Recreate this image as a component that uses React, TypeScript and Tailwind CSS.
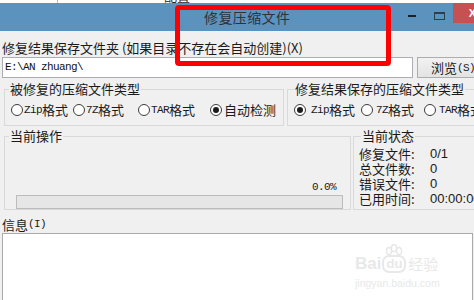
import React from "react";

const cjk = "font-['Noto_Sans_CJK_SC',sans-serif]";
const mono = "font-['Liberation_Mono','Noto_Sans_CJK_SC',monospace]";

function Radio({
  checked,
  ascii,
  text,
  className = "",
  gap = "ml-[1px]",
}: {
  checked?: boolean;
  ascii?: string;
  text: string;
  className?: string;
  gap?: string;
}) {
  return (
    <div className={`flex items-center shrink-0 ${className}`}>
      <span className="w-[12px] h-[12px] rounded-full border border-[#3c3c3c] bg-white flex items-center justify-center shrink-0">
        {checked && <span className="w-[6px] h-[6px] rounded-full bg-[#1b1b1b]" />}
      </span>
      <span className={`${gap} flex items-center leading-[16px] text-[13px] text-[#1a1a1a] whitespace-nowrap`}>
        {ascii && <span className={`${mono} text-[11px] tracking-[-0.6px]`}>{ascii}</span>}
        <span className={cjk}>{text}</span>
      </span>
    </div>
  );
}

function StatusRow({ label, value }: { label: string; value: string }) {
  return (
    <div className="flex h-[15px] items-center text-[13px] leading-[13px] text-[#1a1a1a] whitespace-nowrap">
      <span className={`${cjk} w-[71px] shrink-0`}>{label}</span>
      <span className="font-['Liberation_Sans',sans-serif]">{value}</span>
    </div>
  );
}

export default function App() {
  return (
    <div className={`relative w-[474px] h-[300px] overflow-hidden bg-[#f0f0f0] ${cjk} text-[#1a1a1a]`}>
      {/* strip of the window behind */}
      <div className="relative h-[3px] bg-white overflow-hidden flex">
        <div className="ml-[57px] w-[1px] h-[3px] bg-[#b9b9b9]" />
        <span className="ml-[106px] -mt-[12px] text-[13px] leading-[15px] text-[#222]">配置</span>
      </div>

      {/* title bar */}
      <div className="h-[28px] bg-[#5b93be] flex items-start">
        <span className="pl-[204px] pt-[5px] text-[14px] leading-[18px] tracking-[0.4px] text-[#2e3339]">修复压缩文件</span>
        <div className="ml-auto flex items-start">
          <div className="mt-[12px] w-[8px] h-[2px] bg-[#1f1f1f]" />
          <div className="ml-[18px] mt-[9px] w-[11px] h-[8px] border border-t-2 border-[#2a3f52]" />
          <div className="ml-[8px] w-[21px] h-[20px] bg-[#c75050] flex items-center justify-end overflow-hidden">
            <span className="text-white text-[11px] font-bold leading-none -mr-[2px] font-['Liberation_Sans',sans-serif]">X</span>
          </div>
        </div>
      </div>

      <div className="px-[2px]">
        <div className="mt-[9px] h-[16px] leading-[16px] text-[13px] whitespace-nowrap">
          修复结果保存文件夹 (如果目录不存在会自动创建)(X)
        </div>

        <div className="mt-[1px] flex items-start">
          <div className="w-[411px] h-[21px] bg-white border border-[#abadb3] flex items-center pl-[2px] shrink-0">
            <span className={`${mono} text-[11px] tracking-[-0.6px] text-[#111]`}>E:\AN zhuang\</span>
          </div>
          <div className="ml-[4px] w-[62px] h-[21px] border border-[#adadad] bg-gradient-to-b from-[#f2f2f2] to-[#e3e3e3] flex items-center pl-[13px] shrink-0 text-[13px] leading-[16px] whitespace-nowrap">
            浏览<span className={`${mono} text-[11px] tracking-[-0.6px]`}>(S)</span>
          </div>
        </div>

        {/* archive type groups */}
        <div className="mt-[3px] flex">
          <fieldset className="ml-[2px] w-[280px] h-[45px] border border-[#d9d9d9] shrink-0">
            <legend className="ml-[4px] px-[1px] text-[13px] leading-[16px]">被修复的压缩文件类型</legend>
            <div className="flex items-center mt-[5px] pl-[6px]">
              <Radio ascii="Zip" text="格式" />
              <Radio ascii="7Z" text="格式" className="ml-[5px]" />
              <Radio ascii="TAR" text="格式" className="ml-[14px]" />
              <Radio checked text="自动检测" className="ml-[15px]" gap="ml-[2px]" />
            </div>
          </fieldset>
          <fieldset className="ml-[3px] w-[200px] h-[45px] border border-[#d9d9d9] shrink-0">
            <legend className="ml-[6px] px-[1px] text-[13px] leading-[16px] whitespace-nowrap">修复结果保存的压缩文件类型</legend>
            <div className="flex items-center mt-[5px] pl-[6px]">
              <Radio checked ascii="Zip" text="格式" gap="ml-[5px]" />
              <Radio ascii="7Z" text="格式" className="ml-[6px]" gap="ml-[3px]" />
              <Radio ascii="TAR" text="格式" className="ml-[10px]" gap="ml-[3px]" />
            </div>
          </fieldset>
        </div>

        {/* progress and status */}
        <div className="mt-[2px] flex">
          <fieldset className="ml-[2px] w-[347px] h-[82px] border border-[#d9d9d9] shrink-0">
            <legend className="ml-[4px] px-[1px] text-[13px] leading-[16px]">当前操作</legend>
            <div className="pt-[31px] pr-[14px] text-right leading-[16px]">
              <span className={`${mono} text-[11px] tracking-[-0.6px]`}>0.0%</span>
            </div>
            <div className="ml-[11px] w-[327px] h-[14px] bg-[#e6e6e6] border border-[#bcbcbc]" />
          </fieldset>
          <fieldset className="ml-[2px] w-[140px] h-[82px] border border-[#d9d9d9] shrink-0">
            <legend className="ml-[7px] px-[1px] text-[13px] leading-[16px]">当前状态</legend>
            <div className="pt-[2px] pl-[5px]">
              <StatusRow label="修复文件:" value="0/1" />
              <StatusRow label="总文件数:" value="0" />
              <StatusRow label="错误文件:" value="0" />
              <StatusRow label="已用时间:" value="00:00:00" />
            </div>
          </fieldset>
        </div>

        <div className="mt-[6px] h-[17px] leading-[17px] text-[13px] flex items-center">
          信息<span className={`${mono} text-[11px] tracking-[-0.6px]`}>(I)</span>
        </div>
        <div className="w-[471px] h-[80px] bg-white border border-[#ababab]" />
      </div>

      {/* red highlight drawn over the screenshot */}
      <div className="absolute left-[175px] top-[5px] w-[216px] h-[61px] border-[5px] border-[#ff0000] rounded-[4px]" />

      {/* faint watermark */}
      <div className="absolute left-[355px] top-[244px] text-[#e8e8e8] pointer-events-none whitespace-nowrap">
        <div className="flex items-end">
          <span className="font-['Liberation_Sans',sans-serif] font-bold text-[17px] leading-[18px]">Bai</span>
          <div className="ml-[1px] flex flex-col items-center">
            <svg width="22" height="12" viewBox="0 0 22 12" className="mb-[-1px]">
              <ellipse cx="6" cy="7" rx="2.5" ry="3.5" fill="none" stroke="#e6e6e6" strokeWidth="1.3" />
              <ellipse cx="11" cy="4" rx="2.5" ry="3.5" fill="none" stroke="#e6e6e6" strokeWidth="1.3" />
              <ellipse cx="16" cy="7" rx="2.5" ry="3.5" fill="none" stroke="#e6e6e6" strokeWidth="1.3" />
            </svg>
            <span className="px-[2px] rounded-[7px] border-2 border-[#e8e8e8] font-['Liberation_Sans',sans-serif] font-bold text-[13px] leading-[14px]">du</span>
          </div>
          <span className="ml-[2px] text-[15px] leading-[18px]">经验</span>
        </div>
        <div className="mt-[4px] font-['Liberation_Sans',sans-serif] text-[10.5px] leading-[12px]">jingyan.baidu.com</div>
      </div>
    </div>
  );
}
